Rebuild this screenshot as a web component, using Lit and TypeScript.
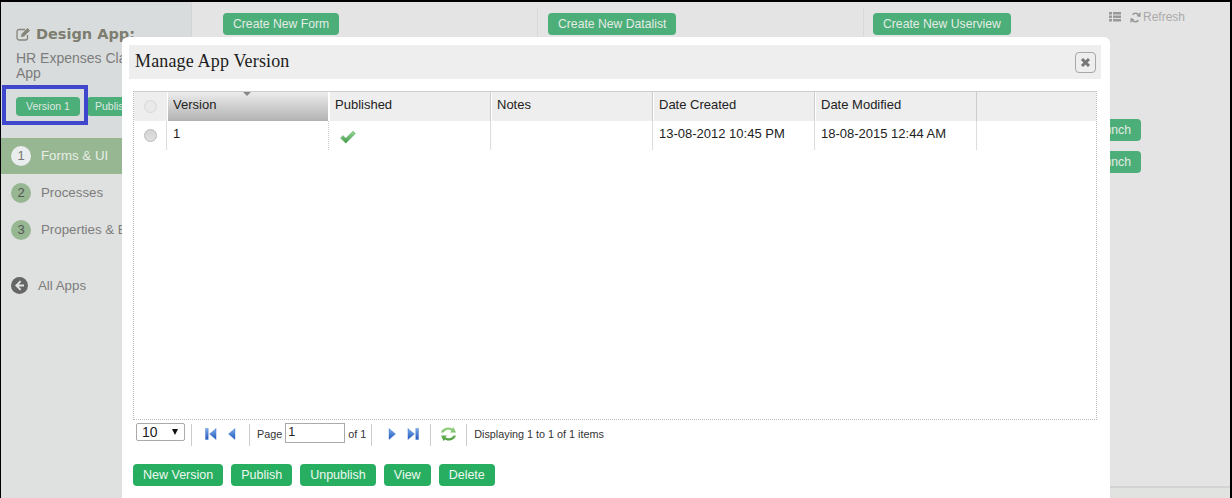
import { LitElement, html, css, svg } from "lit";
import { customElement } from "lit/decorators.js";

const arrowGrad = svg`<defs><linearGradient id="pg" x1="0" y1="0" x2="0" y2="1"><stop offset="0" stop-color="#7fb0f0"/><stop offset="1" stop-color="#1f55b8"/></linearGradient></defs>`;

@customElement("app-root")
export class AppRoot extends LitElement {
  static styles = css`
    :host {
      display: block;
      position: relative;
      box-sizing: border-box;
      width: 1232px;
      height: 498px;
      overflow: hidden;
      border-top: 2px solid #000;
      border-left: 1px solid #000;
      border-right: 2px solid #000;
      font-family: "Liberation Sans", Arial, sans-serif;
      background: #e4e4e4;
    }
    .shell { display: flex; height: 100%; }

    /* sidebar */
    .side {
      width: 190px;
      flex: none;
      background: #dfe1e0;
      border-right: 1px solid #d3d5d4;
      display: flex;
      flex-direction: column;
      color: #777;
    }
    .side-head { background: #d9dcdc; padding: 23px 0 12px 15px; height: 136px; box-sizing: border-box; }
    .design { display: flex; align-items: center; gap: 5px; font: bold 14.5px "DejaVu Sans", sans-serif; color: #7d7d70; height: 18px; white-space: nowrap; }
    .appname { font-size: 14px; line-height: 15px; color: #7c7c7c; margin-top: 8px; width: 150px; }
    .pills { display: flex; gap: 7px; margin-top: 16px; }
    .pill { background: #4cae78; color: #dfe8e2; font-size: 10.5px; height: 19px; line-height: 19px; border-radius: 4px; padding: 0 8px; white-space: nowrap; }
    .pill.first { width: 64px; box-sizing: border-box; text-align: center; padding: 0; }
    .nav { display: flex; align-items: center; height: 36px; padding-left: 10px; gap: 10px; font-size: 13.3px; color: #7c7c7c; white-space: nowrap; margin-bottom: 1px; }
    .nav.on { background: #96b792; color: #e8eee6; }
    .lbl { margin-bottom: 2px; }
    .num { width: 20px; height: 20px; border-radius: 50%; background: #96b792; color: #555; font-size: 13px; line-height: 20px; text-align: center; flex: none; }
    .nav.on .num { background: #e9eded; color: #777; }
    .all { display: flex; align-items: center; gap: 10px; padding-left: 10px; margin-top: 28px; font-size: 13.3px; color: #7c7c7c; }

    /* main */
    .main { flex: 1; min-width: 0; display: flex; flex-direction: column; background: #e4e4e4; }
    .top { flex: 1; display: flex; padding: 6px 0 0 20px; }
    .col { width: 326px; box-sizing: border-box; padding: 5px 0 0 10px; height: 34px; flex: none; border-right: 1px solid #d8d8d8; }
    .col.c1 { padding-left: 11px; }
    .col.last { border-right: 0; width: 150px; padding-left: 9px; }
    .gbtn { display: inline-block; background: #4cae78; color: #e4ece6; font-size: 12.2px; height: 22px; line-height: 22px; border-radius: 4px; padding: 0 10px; white-space: nowrap; }
    .right { flex: 1; display: flex; flex-direction: column; align-items: flex-end; padding-right: 89px; }
    .refresh { display: flex; align-items: center; height: 16px; margin: 1px -44px 94px 0; gap: 9px; color: #aaa; font-size: 12px; }
    .refresh span { display: flex; align-items: center; gap: 2px; }
    .launch { width: 60px; box-sizing: border-box; text-align: center; padding: 0; margin-bottom: 10px; flex: none; }
    .foot { height: 10px; background: #e1e3e1; border-top: 2px solid #d2d4d2; flex: none; }

    /* modal */
    .modal {
      position: absolute;
      left: 121px;
      top: 35px;
      width: 988px;
      height: 480px;
      box-sizing: border-box;
      background: #fff;
      border-radius: 6px;
      padding: 8px 9px 0 7px;
    }
    .titlebar { display: flex; align-items: center; justify-content: space-between; height: 34px; background: #eee; padding: 0 5px 0 6px; }
    .title { font: 18px "Liberation Serif", "Times New Roman", serif; letter-spacing: .16px; color: #1c1c1c; padding-bottom: 2px; }
    .close { width: 19px; height: 19px; border: 1px solid #a8a8a8; border-radius: 4px; display: flex; align-items: center; justify-content: center; }
    .grid {
      margin: 12px 0 0 4px;
      width: 964px;
      height: 329px;
      box-sizing: border-box;
      border: 1px dotted #bbb;
      border-top: 1px solid #ccc;
      color: #222;
      font-size: 13px;
      position: relative;
    }
    .row { display: grid; grid-template-columns: 33px 162px 162px 162px 162px 162px 119px; height: 29px; }
    .h { background: #eee; border-left: 1px solid #fff; border-right: 1px solid #ccc; padding: 5px 0 0 5px; box-sizing: border-box; position: relative; }
    .h:last-child, .h:first-child { border-left: 0; border-right: 0; }
    .h.first { padding: 0; display: flex; align-items: center; justify-content: center; }
    .h.sort { background: linear-gradient(#ececec, #b2b2b2); border-right: 1px solid #fff; }
    .h.sort::after { content: ""; position: absolute; left: 75px; top: 0; border: 4px solid transparent; border-top-color: #888; border-bottom: 0; }
    .c { padding: 5px 0 0 6px; box-sizing: border-box; border-right: 1px solid #ddd; white-space: nowrap; }
    .c.dot { border-right: 1px dotted #ccc; }
    .c:last-child { border-right: 0; }
    .c.radio { padding: 0; display: flex; align-items: center; justify-content: center; }
    .rd { width: 13px; height: 13px; border-radius: 50%; box-sizing: border-box; border: 1px solid #b8b8b8; background: linear-gradient(#d4d4d4, #e0e0e0); display: block; }
    .rd.light { background: #e9e9e9; border-color: #d8d8d8; }
    .check { display: block; margin: 4px 0 0 5px; }

    .pager { display: flex; align-items: center; height: 28px; margin-left: 7px; font-size: 10.8px; color: #333; white-space: nowrap; }
    .sel { width: 49px; height: 18px; box-sizing: border-box; border: 1px solid #aaa; border-radius: 2px; font-size: 14px; display: flex; align-items: center; justify-content: space-between; padding: 0 6px 0 5px; color: #222; margin-bottom: 4px; }
    .arrow { font-size: 0; border: 3.5px solid transparent; border-top: 6px solid #111; border-bottom: 0; }
    .sep { width: 1px; height: 22px; background: #ccc; flex: none; margin: 2px 1px 0 5px; }
    .ic { display: block; flex: none; }
    .s-a { margin-left: 6px; }
    .i-first { margin-left: 12px; }
    .i-prev { margin-left: 10px; }
    .s-b { margin-left: 13px; }
    .page { margin-left: 6px; }
    .pinput { width: 60px; height: 20px; box-sizing: border-box; border: 1px solid #aaa; font-size: 12.5px; padding: 1px 2px; color: #222; margin: 0 3px 2px 3px; }
    .i-next { margin-left: 15px; }
    .i-last { margin-left: 10px; }
    .s-d { margin-left: 11px; }
    .i-ref { margin-left: 8px; }
    .s-e { margin-left: 9px; }
    .disp { margin-left: 6px; }
    .actions { display: flex; gap: 8px; margin: 16px 0 0 4px; }
    .act { background: #27ae60; color: #eef8f1; font-size: 12.5px; height: 22px; line-height: 22px; border-radius: 4px; padding: 0 10px; white-space: nowrap; }

    .mark { position: absolute; left: 1px; top: 83px; width: 86px; height: 40px; box-sizing: border-box; border: 4px solid #3f48cc; }
  `;

  private pager(d: string) {
    return svg`<path d=${d} fill="url(#pg)" stroke="#3b6fc4" stroke-width=".4"/>`;
  }

  render() {
    const heads = ["Version", "Published", "Notes", "Date Created", "Date Modified", ""];
    return html`
      <div class="shell">
        <aside class="side">
          <div class="side-head">
            <div class="design">
              <svg width="15" height="14" viewBox="0 0 15 14" class="ic"><path d="M11.500 8v3a2 2 0 0 1-2 2H3a2 2 0 0 1-2-2V4.500a2 2 0 0 1 2-2h6" fill="none" stroke="#85857a" stroke-width="1.300"/><path d="M5 10l.5-3L11.500 1 14 3.500l-6 6z" fill="#85857a"/></svg>
              Design App:
            </div>
            <div class="appname">HR Expenses Claim App</div>
            <div class="pills"><span class="pill first">Version 1</span><span class="pill">Published</span></div>
          </div>
          <div class="nav on"><span class="num">1</span><span class="lbl">Forms &amp; UI</span></div>
          <div class="nav"><span class="num">2</span><span class="lbl">Processes</span></div>
          <div class="nav"><span class="num">3</span><span class="lbl">Properties &amp; Export</span></div>
          <div class="all">
            <svg width="17" height="17" viewBox="0 0 17 17" class="ic"><circle cx="8.500" cy="8.500" r="8.500" fill="#666"/><path d="M9 3.500 4 8.500l5 5 1.300-1.300-2.700-2.700H13v-2H7.600l2.700-2.700z" fill="#e4e6e5"/></svg>
            All Apps
          </div>
        </aside>
        <div class="main">
          <div class="top">
            <div class="col c1"><span class="gbtn">Create New Form</span></div>
            <div class="col"><span class="gbtn">Create New Datalist</span></div>
            <div class="col last"><span class="gbtn">Create New Userview</span></div>
            <div class="right">
              <div class="refresh">
                <svg width="12" height="10" viewBox="0 0 12 10" class="ic"><path d="M0 0h3v2.500H0zM4 0h8v2.500H4zM0 3.500h3V6H0zM4 3.500h8V6H4zM0 7h3v2.500H0zM4 7h8v2.500H4z" fill="#999"/></svg>
                <span>
                  <svg width="11" height="11" viewBox="0 0 12 12" class="ic"><path d="M10.500 5.500A4.500 4.500 0 0 0 2.800 2.800M1.500 6.500a4.500 4.500 0 0 0 7.700 2.700" fill="none" stroke="#999" stroke-width="1.800"/><path d="M11.500 0v4.500H7zM.5 12V7.500H5z" fill="#999"/></svg>
                  Refresh
                </span>
              </div>
              <div class="gbtn launch">Launch</div>
              <div class="gbtn launch">Launch</div>
            </div>
          </div>
          <div class="foot"></div>
        </div>
      </div>

      <div class="mark"></div>

      <section class="modal">
        <div class="titlebar">
          <span class="title">Manage App Version</span>
          <span class="close"><svg width="11" height="11" viewBox="0 0 11 11"><path d="M2 2l7 7M9 2l-7 7" stroke="#777" stroke-width="3"/></svg></span>
        </div>
        <div class="grid">
          <div class="row">
            <div class="h first"><i class="rd light"></i></div>
            ${heads.map((h, i) => html`<div class="h ${i === 0 ? "sort" : ""}">${h}</div>`)}
          </div>
          <div class="row">
            <div class="c radio"><i class="rd"></i></div>
            <div class="c dot">1</div>
            <div class="c">
              <svg class="check" width="16" height="14" viewBox="0 0 16 14"><defs><linearGradient id="ck" x1="0" y1="0" x2="0" y2="1"><stop offset="0" stop-color="#9ad89a"/><stop offset="1" stop-color="#3f9a45"/></linearGradient></defs><path d="M.5 8 3 5.500l2.800 2.800L13 1l2.500 2.500-9.700 9.800z" fill="url(#ck)" stroke="#5aa860" stroke-width=".4"/></svg>
            </div>
            <div class="c"></div>
            <div class="c">13-08-2012 10:45 PM</div>
            <div class="c">18-08-2015 12:44 AM</div>
            <div class="c"></div>
          </div>
        </div>
        <div class="pager">
          <div class="sel">10<i class="arrow"></i></div>
          <i class="sep s-a"></i>
          <svg class="ic i-first" width="12" height="14" viewBox="0 0 13 14">${arrowGrad}${this.pager("M.5 1h3v12h-3zM12 1v12L5 7z")}</svg>
          <svg class="ic i-prev" width="9" height="14" viewBox="0 0 9 14">${this.pager("M8 1.500v11L1.500 7z")}</svg>
          <i class="sep s-b"></i>
          <span class="page">Page</span>
          <div class="pinput">1</div>
          <span>of 1</span>
          <i class="sep"></i>
          <svg class="ic i-next" width="9" height="14" viewBox="0 0 9 14">${this.pager("M1 1.500v11L7.500 7z")}</svg>
          <svg class="ic i-last" width="12" height="14" viewBox="0 0 13 14">${this.pager("M12.500 1h-3v12h3zM1 1v12l7-6z")}</svg>
          <i class="sep s-d"></i>
          <svg class="ic i-ref" width="17" height="16" viewBox="0 0 17 16"><defs><linearGradient id="rf" x1="0" y1="0" x2="0" y2="1"><stop offset="0" stop-color="#9ed68a"/><stop offset="1" stop-color="#4c9a3e"/></linearGradient></defs><path d="M1 6.500C2 3 5 1.500 8.500 1.500c1.500 0 3 .5 3.500 1L13.500 1 16 6.500H10l1.500-1.800C10.500 4 9.500 3.800 8.500 3.800 6 3.800 4.500 5 3.500 6.500zM16 9.500c-1 3.500-4 5-7.500 5-1.500 0-3-.5-3.500-1L3.500 15 1 9.500h6l-1.500 1.800c1 .7 2 .9 3 .9 2.500 0 4-1.200 5-2.700z" fill="url(#rf)"/></svg>
          <i class="sep s-e"></i>
          <span class="disp">Displaying 1 to 1 of 1 items</span>
        </div>
        <div class="actions">
          ${["New Version", "Publish", "Unpublish", "View", "Delete"].map((a) => html`<span class="act">${a}</span>`)}
        </div>
      </section>
    `;
  }
}
